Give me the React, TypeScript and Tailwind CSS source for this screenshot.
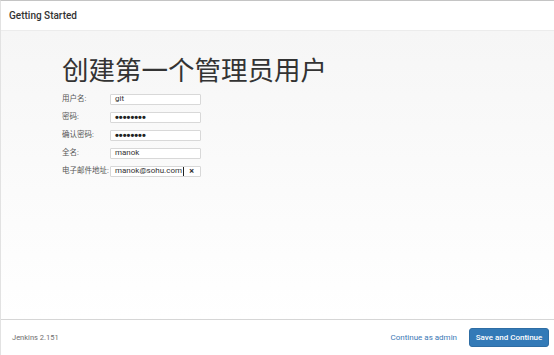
import React from "react";

const font = { fontFamily: 'Roboto, "Noto Sans CJK SC", sans-serif' };

function Row({ label, value, password, clear, caret }: { label: string; value: string; password?: boolean; clear?: boolean; caret?: boolean }) {
  return (
    <div className="flex items-center h-[18px]">
      <div className="w-[48px] text-[7.5px] text-[#555] leading-none">{label}</div>
      <div className="relative w-[91px] h-[11px] border border-[#d8d8d8] bg-white rounded-[1px] flex items-center pl-[4px]">
        <span className={password ? "text-[11px] font-bold leading-none text-[#222]" : "text-[8px] leading-none text-[#333]"} style={password ? { fontFamily: '"Liberation Sans", sans-serif' } : undefined}>
          {password ? "••••••••" : value}
        </span>
        {caret && <span className="w-px h-[9px] bg-[#222] ml-[1px]" />}
        {clear && <span className="absolute right-[6px] top-[0px] text-[9px] font-bold leading-[9px] text-[#333]">×</span>}
      </div>
    </div>
  );
}

export default function App() {
  return (
    <div className="w-[554px] h-[355px] flex flex-col bg-white border-t border-[#c4c4c4] border-l border-l-[#e2e2e2]" style={font}>
      <div className="h-[30px] flex items-center pl-[8px] border-b border-[#ececec] bg-white">
        <span className="text-[10px] font-medium text-[#333]">Getting Started</span>
      </div>
      <div className="flex-1 bg-gradient-to-b from-[#f6f6f6] to-[#ffffff] pl-[61px] pt-[21px]">
        <h1 className="text-[26.5px] leading-[34px] text-[#333] font-normal" style={{ fontFamily: '"Noto Sans CJK SC", sans-serif' }}>
          创建第一个管理员用户
        </h1>
        <div className="mt-[4px] flex flex-col">
          <Row label="用户名:" value="git" />
          <Row label="密码:" value="" password />
          <Row label="确认密码:" value="" password />
          <Row label="全名:" value="manok" />
          <Row label="电子邮件地址:" value="manok@sohu.com" clear caret />
        </div>
      </div>
      <div className="h-[36px] border-t border-[#d6d6d6] bg-white flex items-center pl-[11px] pr-[5px]">
        <span className="text-[7.5px] text-[#6f6f6f]">Jenkins 2.151</span>
        <div className="flex-1" />
        <span className="text-[8px] text-[#3a78b5] mr-[12px]">Continue as admin</span>
        <div className="w-[80px] h-[19px] rounded-[3px] bg-[#337ab7] border border-[#2e6da4] flex items-center justify-center">
          <span className="text-[8px] font-medium text-white">Save and Continue</span>
        </div>
      </div>
    </div>
  );
}
